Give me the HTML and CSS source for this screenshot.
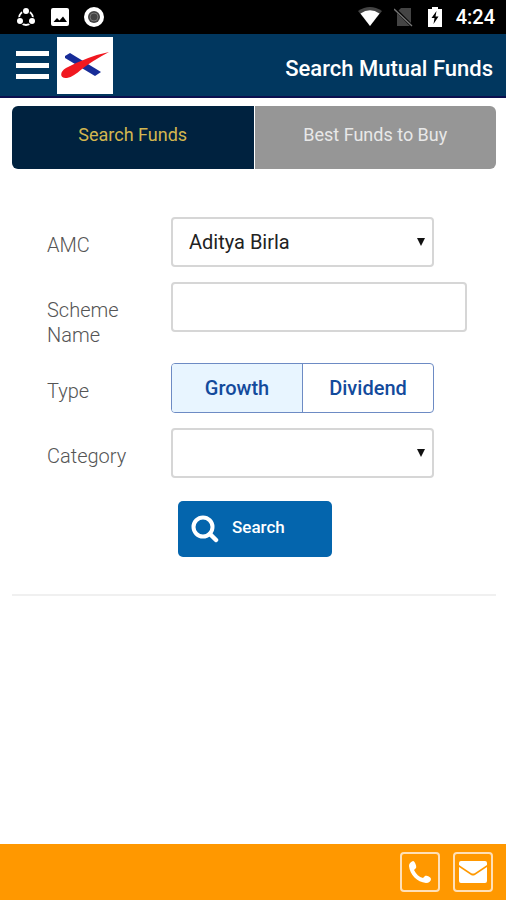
FILE: index.html
```html
<!DOCTYPE html>
<html lang="en">
<head>
<meta charset="utf-8">
<meta name="viewport" content="width=device-width, initial-scale=1">
<title>Search Mutual Funds</title>
<link rel="stylesheet" href="styles.css">
</head>
<body>
<div class="status">
  <div class="status-left">
    <svg width="20" height="20" viewBox="0 0 20 20" aria-hidden="true"><circle cx="10" cy="11" r="7" fill="none" stroke="#fff" stroke-width="1.800"/><circle cx="10" cy="4" r="4" fill="#000"/><circle cx="4" cy="14" r="4" fill="#000"/><circle cx="16" cy="14" r="4" fill="#000"/><circle cx="10" cy="4" r="3" fill="#fff"/><circle cx="4" cy="14" r="3" fill="#fff"/><circle cx="16" cy="14" r="3" fill="#fff"/></svg>
    <svg width="20" height="20" viewBox="0 0 20 20" aria-hidden="true"><rect x="1" y="1" width="18" height="18" rx="2" fill="#fff"/><path d="M3.500 15l3.500-4 2.500 2.500 3.500-4 4 5.500z" fill="#000"/></svg>
    <svg width="20" height="20" viewBox="0 0 20 20" aria-hidden="true"><circle cx="10" cy="10" r="10" fill="#fff"/><circle cx="10" cy="10" r="6" fill="#444"/><circle cx="10" cy="10" r="4" fill="none" stroke="#777" stroke-width="1"/></svg>
  </div>
  <div class="status-right">
    <svg width="24" height="20" viewBox="0 0 24 20" aria-hidden="true"><path d="M0 4Q12-4 24 4L12 19z" fill="#444"/><path d="M2.500 6.500Q12 0 21.500 6.500L12 19z" fill="#fff"/></svg>
    <svg width="20" height="20" viewBox="0 0 20 20" aria-hidden="true"><path d="M7 1h10v18H3V5z" fill="#444"/><path d="M1 2l17 17" stroke="#000" stroke-width="3"/><path d="M0 2l18 17" stroke="#777" stroke-width="1.300"/></svg>
    <svg class="battery" width="14" height="20" viewBox="0 0 14 20" aria-hidden="true"><path d="M0 2h4V0h6v2h4v18H0z" fill="#fff"/><path d="M8.500 4L3.500 11H6.500L5.500 17L10.500 9.500H7.500z" fill="#000"/></svg>
    <span>4:24</span>
  </div>
</div>
<header class="header">
  <button class="menu" type="button" aria-label="Menu"><svg width="33" height="30" viewBox="0 0 33 30"><path d="M0 1h33v5H0zM0 13h33v5H0zM0 24h33v5H0z" fill="#fff"/></svg></button>
  <a class="logo" href="#" aria-label="Home"><svg width="56" height="57" viewBox="0 0 56 57"><path d="M8 19l5-3 31 19-6 4L8 21z" fill="#172c98"/><path d="M52 15Q32 19 9 31C2 35 3 42 10 41C15 40 19 37 25 32Q35 24 52 15z" fill="#f01820"/></svg></a>
  <h1>Search Mutual Funds</h1>
</header>
<main class="main">
  <nav class="tabs">
    <a class="tab active" href="#">Search Funds</a>
    <a class="tab" href="#">Best Funds to Buy</a>
  </nav>
  <form class="form">
    <div class="row">
      <label class="label" for="amc">AMC</label>
      <div class="select"><select class="field" id="amc"><option>Aditya Birla</option></select><svg class="arrow" width="8" height="8" viewBox="0 0 8 8" aria-hidden="true"><path d="M0 0h8L4 8z" fill="#111"/></svg></div>
    </div>
    <div class="row">
      <label class="label" for="scheme">Scheme Name</label>
      <input class="field" id="scheme" type="text">
    </div>
    <div class="row">
      <span class="label" id="type">Type</span>
      <div class="toggle" role="radiogroup" aria-labelledby="type">
        <label class="choice"><input type="radio" name="type" checked><span>Growth</span></label>
        <label class="choice"><input type="radio" name="type"><span>Dividend</span></label>
      </div>
    </div>
    <div class="row">
      <label class="label" for="category">Category</label>
      <div class="select"><select class="field" id="category"><option></option></select><svg class="arrow" width="8" height="8" viewBox="0 0 8 8" aria-hidden="true"><path d="M0 0h8L4 8z" fill="#111"/></svg></div>
    </div>
    <button class="search" type="submit"><svg width="28" height="28" viewBox="0 0 28 28" aria-hidden="true"><circle cx="12" cy="12" r="9.500" fill="none" stroke="#fff" stroke-width="4"/><path d="M19 19l6 6" stroke="#fff" stroke-width="4.500" stroke-linecap="round"/></svg><span>Search</span></button>
  </form>
</main>
<footer class="footer">
  <a class="contact" href="#" aria-label="Call"><svg width="24" height="24" viewBox="0 0 24 24"><path d="M5 1C2 2 1 4 1 6C2 15 9 22 18 23C21 23 23 21 23 19C23 17 18 15 17 16L15 18C11 17 8 14 6 10L8 8C9 7 7 1 5 1z" fill="#fff"/></svg></a>
  <a class="contact" href="#" aria-label="Email"><svg width="30" height="24" viewBox="0 0 30 24"><path d="M3 1h24q2 0 2 2v2L17 13q-2 1-4 0L1 5V3q0-2 2-2z" fill="#fff"/><path d="M1 7l12 8q2 1 4 0l12-8v14q0 2-2 2H3q-2 0-2-2z" fill="#fff"/></svg></a>
</footer>
</body>
</html>
```

FILE: styles.css
```css
* { box-sizing: border-box; }

body {
  margin: 0;
  min-height: 100vh;
  display: flex;
  flex-direction: column;
  background: #fff;
  font-family: Roboto, "Liberation Sans", sans-serif;
}

a { text-decoration: none; }
svg { display: block; flex: none; }
button, input, select { font-family: inherit; }

.status {
  height: 34px;
  padding: 0 11px 0 16px;
  display: flex;
  align-items: center;
  justify-content: space-between;
  background: #000;
  color: #fff;
  font-size: 20px;
  font-weight: 500;
}

.status-left { display: flex; gap: 14px; }
.status-right { display: flex; align-items: center; gap: 12px; }
.battery { margin: 0 2px; }

.header {
  height: 64px;
  padding: 0 13px 0 16px;
  display: flex;
  align-items: center;
  background: #01375f;
  border-bottom: 2px solid #0b104f;
}

.menu {
  padding: 0;
  border: 0;
  background: none;
}

.logo {
  margin-left: 8px;
  background: #fff;
}

.header h1 {
  margin: 0 0 0 auto;
  padding-top: 8px;
  color: #fff;
  font-size: 22px;
  line-height: 28px;
  font-weight: 500;
}

.main {
  flex: 1;
  padding: 8px 10px 0 12px;
}

.tabs {
  display: flex;
  gap: 1px;
  border-radius: 6px;
  overflow: hidden;
}

.tab {
  flex: 1;
  padding: 16px 0 22px;
  background: #969696;
  color: #e8e8e8;
  font-size: 18px;
  line-height: 25px;
  text-align: center;
}

.tab.active {
  background: #00223f;
  color: #d3b64f;
}

.form {
  padding: 48px 29px 37px 35px;
  display: flex;
  flex-direction: column;
  gap: 15px;
  border-bottom: 2px solid #f0f0f0;
}

.row {
  display: grid;
  grid-template-columns: 84px 1fr;
  column-gap: 40px;
  align-items: start;
}

.label {
  padding-top: 16px;
  color: #555;
  font-size: 20px;
  line-height: 25px;
  font-weight: 300;
}

.select, .toggle {
  position: relative;
  width: 100%;
  max-width: 263px;
}

.field {
  width: 100%;
  height: 50px;
  padding: 0 16px;
  appearance: none;
  border: 2px solid #d6d6d6;
  border-radius: 4px;
  background: #fff;
  color: #222;
  font-size: 20px;
}

.arrow {
  position: absolute;
  top: 21px;
  right: 9px;
  pointer-events: none;
}

.toggle {
  height: 50px;
  display: flex;
  border: 1px solid #6d8bc4;
  border-radius: 4px;
  overflow: hidden;
}

.choice {
  flex: 1;
  position: relative;
  display: flex;
}

.choice + .choice { border-left: 1px solid #6d8bc4; }

.choice input {
  position: absolute;
  opacity: 0;
}

.choice span {
  flex: 1;
  color: #134a9c;
  font-size: 20px;
  line-height: 48px;
  font-weight: 500;
  text-align: center;
}

.choice input:checked + span { background: #e8f5ff; }

.search {
  width: 154px;
  height: 56px;
  margin: 8px 0 0 131px;
  padding: 0 13px;
  display: flex;
  align-items: center;
  gap: 13px;
  border: 0;
  border-radius: 5px;
  background: #0465ad;
  color: #fff;
  font-size: 17px;
  font-weight: 500;
}

.search span { padding-bottom: 4px; }

.footer {
  height: 56px;
  padding: 0 13px;
  display: flex;
  align-items: center;
  justify-content: flex-end;
  gap: 13px;
  background: #ff9800;
}

.contact {
  width: 40px;
  height: 40px;
  display: flex;
  align-items: center;
  justify-content: center;
  border: 2px solid #ffe0b8;
  border-radius: 4px;
}
```
